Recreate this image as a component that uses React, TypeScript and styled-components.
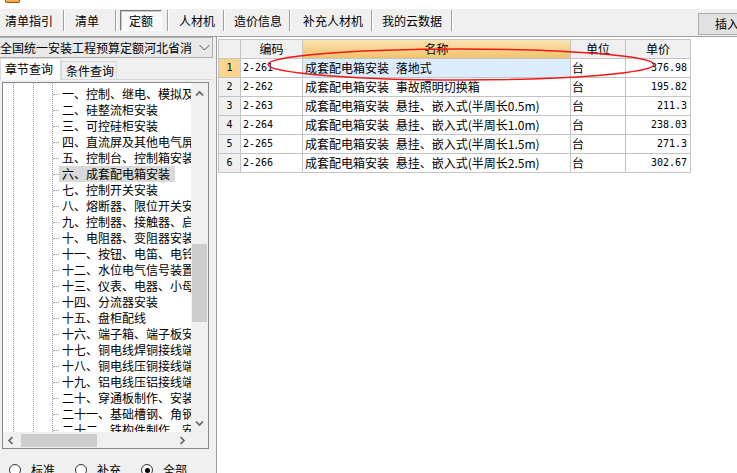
import React from "react";
import styled, { createGlobalStyle, css } from "styled-components";

const GlobalStyle = createGlobalStyle`
  html, body { margin: 0; padding: 0; background: #fff; }
  body {
    font-family: "Noto Sans CJK SC", "Noto Sans", sans-serif;
    font-size: 12px;
    color: #000;
  }
  * { box-sizing: border-box; }
`;

const Page = styled.div`
  width: 737px;
  height: 473px;
  overflow: hidden;
  display: flex;
  flex-direction: column;
  background: #fff;
`;

const TitleStrip = styled.div`
  height: 9px;
  flex-shrink: 0;
  padding-left: 5px;
  background: #fff;
`;

const AppIcon = styled.div`
  width: 15px;
  height: 3px;
  background: linear-gradient(#f9c070, #ec8f2c);
  border: 1px solid #a85a17;
  border-top: none;
  border-radius: 0 0 2px 2px;
`;

const Toolbar = styled.div`
  height: 28px;
  flex-shrink: 0;
  display: flex;
  align-items: flex-start;
  padding-top: 1px;
  background: #f0f0f0;
  border-bottom: 1px solid #a0a0a0;
`;

const ToolTab = styled.div<{ $pl: number; $pr: number }>`
  height: 21px;
  line-height: 21px;
  padding: 0 ${(p) => p.$pr}px 0 ${(p) => p.$pl}px;
  white-space: nowrap;
  flex-shrink: 0;
`;

const ToolTabSelected = styled.div`
  height: 21px;
  line-height: 19px;
  margin: 0 5px 0 3px;
  padding: 0 8px;
  background: #f8f8f8;
  border: 1px solid #fff;
  border-top-color: #7a7a7a;
  border-left-color: #7a7a7a;
  box-shadow: inset 1px 1px 0 #c8c8c8;
  flex-shrink: 0;
`;

const Sep = styled.div`
  width: 2px;
  height: 21px;
  border-left: 1px solid #a0a0a0;
  border-right: 1px solid #fff;
  flex-shrink: 0;
`;

const InsertButton = styled.div`
  margin-left: auto;
  margin-right: -13px;
  align-self: flex-end;
  margin-bottom: 1px;
  width: 52px;
  height: 22px;
  flex-shrink: 0;
  padding-left: 16px;
  line-height: 20px;
  white-space: nowrap;
  background: #e1e1e1;
  border: 1px solid #adadad;
`;

const Body = styled.div`
  flex: 1;
  min-height: 0;
  display: flex;
`;

const LeftPanel = styled.div`
  width: 213px;
  flex-shrink: 0;
  display: flex;
  flex-direction: column;
  background: #f0f0f0;
`;

const Combo = styled.div`
  height: 21px;
  flex-shrink: 0;
  display: flex;
  align-items: center;
  justify-content: space-between;
  padding-right: 2px;
  background: #e9e9e9;
  border: 1px solid #adadad;
  border-left: none;
`;

const ComboText = styled.div`
  white-space: nowrap;
  overflow: hidden;
  line-height: 19px;
`;

const TabsRow = styled.div`
  height: 22px;
  flex-shrink: 0;
  display: flex;
  align-items: flex-end;
  border-bottom: 1px solid #d9d9d9;
`;

const Tab = styled.div<{ $active?: boolean }>`
  white-space: nowrap;
  border: 1px solid #d9d9d9;
  border-bottom: none;
  padding-left: 4px;
  ${(p) =>
    p.$active
      ? css`
          width: 61px;
          height: 22px;
          line-height: 20px;
          background: #fff;
          margin-bottom: -1px;
        `
      : css`
          width: 56px;
          height: 18px;
          line-height: 17px;
          background: #f0f0f0;
        `}
`;

const TreeBox = styled.div`
  margin: 2px 4px 0 2px;
  height: 367px;
  flex-shrink: 0;
  border: 1px solid #828790;
  background: #fff;
  display: grid;
  grid-template-columns: 1fr 17px;
  grid-template-rows: 1fr 16px;
`;

const dots = "repeating-linear-gradient(to bottom, #a0a0a0 0px, #a0a0a0 1px, transparent 1px, transparent 2px)";

const TreeContent = styled.div`
  overflow: hidden;
  padding-top: 3px;
  background-image: ${dots}, ${dots}, ${dots};
  background-size: 1px 100%;
  background-position: 10px 0, 30px 0, 49px 0;
  background-repeat: no-repeat;
`;

const TreeRow = styled.div`
  display: flex;
  align-items: center;
  height: 16px;
  padding-left: 50px;
  white-space: nowrap;
`;

const Connector = styled.span`
  width: 6px;
  flex-shrink: 0;
  border-top: 1px dotted #a0a0a0;
`;

const TreeLabel = styled.span<{ $selected?: boolean }>`
  flex-shrink: 0;
  height: 16px;
  line-height: 16px;
  padding: 0 5px 0 3px;
  background: ${(p) => (p.$selected ? "#d9d9d9" : "transparent")};
`;

const VScroll = styled.div`
  background: #f0f0f0;
  display: flex;
  flex-direction: column;
  align-items: center;
`;

const HScroll = styled.div`
  background: #f0f0f0;
  display: flex;
  align-items: center;
`;

const ScrollButton = styled.div<{ $w?: number; $h?: number }>`
  width: ${(p) => (p.$w ? `${p.$w}px` : "100%")};
  height: ${(p) => (p.$h ? `${p.$h}px` : "100%")};
  flex-shrink: 0;
  display: flex;
  align-items: center;
  justify-content: center;
`;

const VThumb = styled.div`
  width: 15px;
  height: 78px;
  margin-top: 139px;
  background: #cdcdcd;
  flex-shrink: 0;
`;

const HThumb = styled.div`
  width: 76px;
  height: 13px;
  margin-left: 1px;
  background: #cdcdcd;
  flex-shrink: 0;
`;

const Spacer = styled.div`
  flex: 1;
`;

const Corner = styled.div`
  background: #f0f0f0;
`;

const RadioRow = styled.div`
  flex: 1;
  display: flex;
  align-items: flex-start;
  padding: 14px 0 0 9px;
`;

const RadioItem = styled.div`
  display: flex;
  align-items: center;
  gap: 10px;
  margin-right: 20px;
`;

const RadioCircle = styled.span<{ $checked?: boolean }>`
  width: 12px;
  height: 12px;
  border-radius: 50%;
  border: 1px solid #333;
  background: #fff;
  display: flex;
  align-items: center;
  justify-content: center;
  &::after {
    content: "";
    width: 5px;
    height: 5px;
    border-radius: 50%;
    background: ${(p) => (p.$checked ? "#000" : "transparent")};
  }
`;

const RadioLabel = styled.span`
  line-height: 14px;
`;

const Splitter = styled.div`
  width: 4px;
  flex-shrink: 0;
  background: #f0f0f0;
  border-right: 1px solid #a0a0a0;
`;

const Main = styled.div`
  flex: 1;
  position: relative;
  background: #fff;
  padding: 2px 0 0 1px;
`;

const Grid = styled.div`
  display: grid;
  grid-template-columns: 22px 62px 268px 55px 65px;
  width: fit-content;
  border-left: 1px solid #c4c4c4;
  border-top: 1px solid #c4c4c4;
`;

const Cell = styled.div<{ $align?: "left" | "center" | "right"; $bg?: string; $pad?: string }>`
  height: 19px;
  line-height: 18px;
  border-right: 1px solid #c4c4c4;
  border-bottom: 1px solid #c4c4c4;
  white-space: nowrap;
  overflow: hidden;
  word-spacing: 4px;
  text-align: ${(p) => p.$align || "left"};
  padding: ${(p) => p.$pad || "0 2px"};
  background: ${(p) => p.$bg || "#fff"};
`;

const HeadCell = styled(Cell)<{ $active?: boolean }>`
  text-align: center;
  background: ${(p) => (p.$active ? "linear-gradient(to bottom, #fbe3b4, #f2c26a)" : "#f0f0f0")};
`;

const Mono = styled.span`
  display: inline-block;
  vertical-align: top;
  line-height: 18px;
  font-family: "DejaVu Sans Mono", "Liberation Mono", monospace;
  font-size: 10px;
`;

const Overlay = styled.svg`
  position: absolute;
  left: 0;
  top: 0;
  width: 100%;
  height: 100%;
  pointer-events: none;
`;

const Chevron = ({ dir }: { dir: "up" | "down" | "left" | "right" }) => {
  const pts =
    dir === "up"
      ? "1,5.5 4.5,2 8,5.5"
      : dir === "down"
      ? "1,2.5 4.5,6 8,2.5"
      : dir === "left"
      ? "5.5,1 2,4.5 5.5,8"
      : "2.5,1 6,4.5 2.5,8";
  return (
    <svg width="9" height="9" viewBox="0 0 9 9">
      <polyline points={pts} fill="none" stroke="#606060" strokeWidth="1.6" />
    </svg>
  );
};

const treeItems = [
  "一、控制、继电、模拟及配电屏安装",
  "二、硅整流柜安装",
  "三、可控硅柜安装",
  "四、直流屏及其他电气屏安装",
  "五、控制台、控制箱安装",
  "六、成套配电箱安装",
  "七、控制开关安装",
  "八、熔断器、限位开关安装",
  "九、控制器、接触器、启动器安装",
  "十、电阻器、变阻器安装",
  "十一、按钮、电笛、电铃安装",
  "十二、水位电气信号装置安装",
  "十三、仪表、电器、小母线安装",
  "十四、分流器安装",
  "十五、盘柜配线",
  "十六、端子箱、端子板安装",
  "十七、铜电线焊铜接线端子",
  "十八、铜电线压铜接线端子",
  "十九、铝电线压铝接线端子",
  "二十、穿通板制作、安装",
  "二十一、基础槽钢、角钢安装",
  "二十二、铁构件制作、安装",
];

const rows = [
  { code: "2-261", name: "成套配电箱安装 落地式", unit: "台", price: "376.98" },
  { code: "2-262", name: "成套配电箱安装 事故照明切换箱", unit: "台", price: "195.82" },
  { code: "2-263", name: "成套配电箱安装 悬挂、嵌入式(半周长0.5m)", unit: "台", price: "211.3" },
  { code: "2-264", name: "成套配电箱安装 悬挂、嵌入式(半周长1.0m)", unit: "台", price: "238.03" },
  { code: "2-265", name: "成套配电箱安装 悬挂、嵌入式(半周长1.5m)", unit: "台", price: "271.3" },
  { code: "2-266", name: "成套配电箱安装 悬挂、嵌入式(半周长2.5m)", unit: "台", price: "302.67" },
];

export default function App() {
  return (
    <>
      <GlobalStyle />
      <Page>
        <TitleStrip>
          <AppIcon />
        </TitleStrip>
        <Toolbar>
          <ToolTab $pl={5} $pr={10}>清单指引</ToolTab>
          <Sep />
          <ToolTab $pl={10} $pr={16}>清单</ToolTab>
          <Sep />
          <ToolTabSelected>定额</ToolTabSelected>
          <Sep />
          <ToolTab $pl={10} $pr={8}>人材机</ToolTab>
          <Sep />
          <ToolTab $pl={9} $pr={7}>造价信息</ToolTab>
          <Sep />
          <ToolTab $pl={12} $pr={8}>补充人材机</ToolTab>
          <Sep />
          <ToolTab $pl={9} $pr={9}>我的云数据</ToolTab>
          <Sep />
          <InsertButton>插入</InsertButton>
        </Toolbar>
        <Body>
          <LeftPanel>
            <Combo>
              <ComboText>全国统一安装工程预算定额河北省消</ComboText>
              <svg width="11" height="7" viewBox="0 0 11 7">
                <polyline points="0.5,1 5.5,6 10.5,1" fill="none" stroke="#555" strokeWidth="1" />
              </svg>
            </Combo>
            <TabsRow>
              <Tab $active>章节查询</Tab>
              <Tab>条件查询</Tab>
            </TabsRow>
            <TreeBox>
              <TreeContent>
                {treeItems.map((t, i) => (
                  <TreeRow key={t}>
                    <Connector />
                    <TreeLabel $selected={i === 5}>{t}</TreeLabel>
                  </TreeRow>
                ))}
              </TreeContent>
              <VScroll>
                <ScrollButton $h={22}>
                  <Chevron dir="up" />
                </ScrollButton>
                <VThumb />
                <Spacer />
                <ScrollButton $h={18}>
                  <Chevron dir="down" />
                </ScrollButton>
              </VScroll>
              <HScroll>
                <ScrollButton $w={17}>
                  <Chevron dir="left" />
                </ScrollButton>
                <HThumb />
                <Spacer />
                <ScrollButton $w={17}>
                  <Chevron dir="right" />
                </ScrollButton>
              </HScroll>
              <Corner />
            </TreeBox>
            <RadioRow>
              <RadioItem>
                <RadioCircle />
                <RadioLabel>标准</RadioLabel>
              </RadioItem>
              <RadioItem>
                <RadioCircle />
                <RadioLabel>补充</RadioLabel>
              </RadioItem>
              <RadioItem>
                <RadioCircle $checked />
                <RadioLabel>全部</RadioLabel>
              </RadioItem>
            </RadioRow>
          </LeftPanel>
          <Splitter />
          <Main>
            <Grid>
              <HeadCell />
              <HeadCell>编码</HeadCell>
              <HeadCell $active>名称</HeadCell>
              <HeadCell>单位</HeadCell>
              <HeadCell>单价</HeadCell>
              {rows.map((r, i) => (
                <React.Fragment key={r.code}>
                  <Cell $align="center" $bg={i === 0 ? "#fdd48c" : "#f0f0f0"}>
                    <Mono>{i + 1}</Mono>
                  </Cell>
                  <Cell>
                    <Mono>{r.code}</Mono>
                  </Cell>
                  <Cell $bg={i === 0 ? "#dcecfc" : "#fff"}>{r.name}</Cell>
                  <Cell $pad="0 1px">{r.unit}</Cell>
                  <Cell $align="right" $pad="0 3px 0 2px">
                    <Mono>{r.price}</Mono>
                  </Cell>
                </React.Fragment>
              ))}
            </Grid>
            <Overlay>
              <ellipse cx="244" cy="27.5" rx="193" ry="15.5" fill="none" stroke="#f01818" strokeWidth="1.4" />
            </Overlay>
          </Main>
        </Body>
      </Page>
    </>
  );
}
